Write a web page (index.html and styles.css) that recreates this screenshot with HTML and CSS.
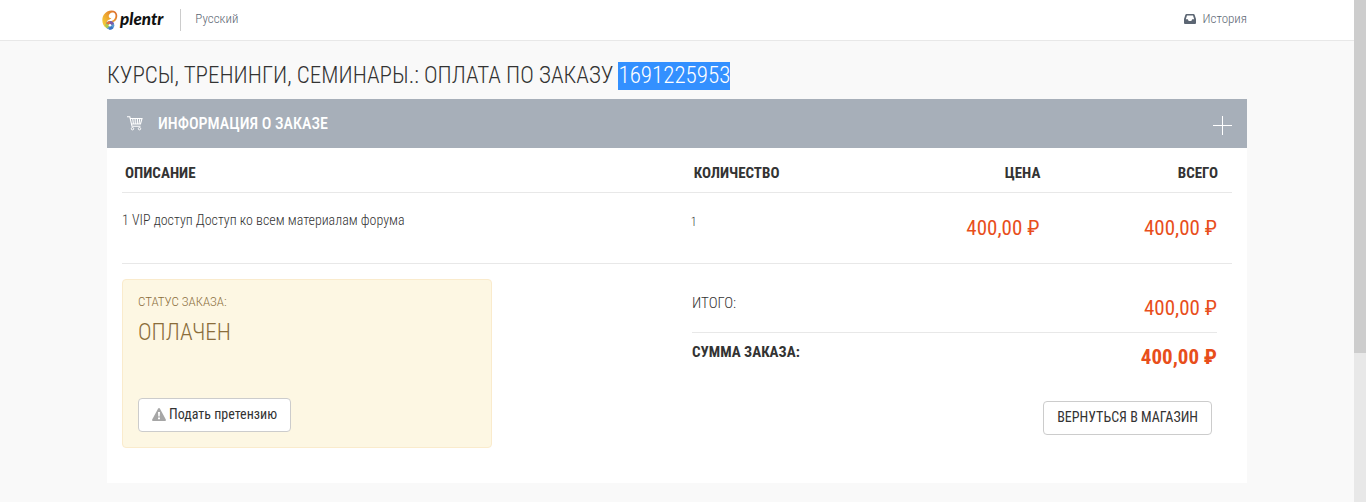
FILE: index.html
```
<!DOCTYPE html>
<html lang="ru">
<head>
    <meta charset="UTF-8">
    <meta name="viewport" content="width=device-width, initial-scale=1.0">
    <title>Оплата по заказу 1691225953</title>
    <link rel="stylesheet" href="styles.css">
</head>
<body>
    <div class="page">
        <header class="navbar">
            <div class="container navbar-inner">
                <a class="logo" href="#">
                    <svg class="logo-icon" width="17" height="20" viewBox="0 0 17 20" aria-hidden="true">
                        <defs>
                            <linearGradient id="gold" x1="0" y1="1" x2="1" y2="0">
                                <stop offset="0" stop-color="#f7dc3c"/>
                                <stop offset=".5" stop-color="#eda52f"/>
                                <stop offset="1" stop-color="#d9622c"/>
                            </linearGradient>
                        </defs>
                        <path fill="url(#gold)" d="M4.500 18C0 15.500-.8 9 1.800 4.800C4.500.500 10.500-.6 13.500 1.700C16.500 4.300 15.500 10 12 11.800C10 12.800 7.500 12.300 6.500 10.800C9 11.500 11 10.800 12.400 9C14 6.800 13.800 3.800 12 2.800C9.800 1.600 7.300 3.200 6.800 5.500C6.500 7.500 8 8.500 9.500 7.800C8.300 10 5.500 9.500 5 12Z"/>
                        <circle cx="8" cy="15.300" r="4.300" fill="#5c9bd0"/>
                        <path d="M8 15.300L4 13.500A4.300 4.300 0 0 1 8 11Z" fill="#e5703c"/>
                        <path d="M8 15.300V11A4.300 4.300 0 0 1 12 14Z" fill="#7d5ba6"/>
                        <path d="M8 15.300L5 18.500A4.300 4.300 0 0 1 4 13.500Z" fill="#b0c94b"/>
                        <path d="M8 15.300L11.500 18A4.300 4.300 0 0 1 7 19.500Z" fill="#3974c4"/>
                        <circle cx="8" cy="15.300" r="1.300" fill="#fff"/>
                    </svg>
                    <span class="logo-text">plentr</span>
                </a>
                <a class="nav-link lang" href="#">Русский</a>
                <a class="nav-link history" href="#">
                    <svg width="12" height="10" viewBox="0 0 12 10" aria-hidden="true">
                        <path fill="#5c6673" fill-rule="evenodd" d="M2.500 0H9.500Q10.300 0 10.600.800L12 5V9Q12 10 11 10H1Q0 10 0 9V5L1.400.800Q1.700 0 2.500 0ZM3 1.500L1.800 5.300H3.800L4.700 7H7.300L8.200 5.300H10.200L9 1.500Z"/>
                    </svg>
                    История
                </a>
            </div>
        </header>

        <main class="container">
            <h1 class="title">Курсы, тренинги, семинары.: оплата по заказу <mark>1691225953</mark></h1>

            <section class="panel">
                <div class="panel-heading">
                    <svg width="16" height="15" viewBox="0 0 16 15" fill="none" stroke="#fff" aria-hidden="true">
                        <path d="M0 .700H2.800L5 10.300H13.500M3.200 2.500H15L13.500 8H4.600M5.700 2.500L6.400 8M8.100 2.500L8.300 8M10.500 2.500L10.300 8M12.800 2.500L12 8" stroke-width="1.100"/>
                        <circle cx="5.500" cy="12.700" r="1.200"/>
                        <circle cx="12.500" cy="12.700" r="1.200"/>
                    </svg>
                    <h2>Информация о заказе</h2>
                    <button class="toggle" type="button" aria-label="Развернуть">
                        <svg width="19" height="19" viewBox="0 0 19 19" stroke="#fff" aria-hidden="true">
                            <path d="M9.500 0V19M0 9.500H19"/>
                        </svg>
                    </button>
                </div>

                <div class="panel-body">
                    <table class="items">
                        <thead>
                            <tr>
                                <th class="col-name">Описание</th>
                                <th class="col-count">Количество</th>
                                <th class="col-price">Цена</th>
                                <th class="col-price">Всего</th>
                            </tr>
                        </thead>
                        <tbody>
                            <tr>
                                <td>1 VIP доступ Доступ ко всем материалам форума</td>
                                <td class="count">1</td>
                                <td class="price">400,00 ₽</td>
                                <td class="price">400,00 ₽</td>
                            </tr>
                        </tbody>
                    </table>

                    <div class="summary">
                        <div class="status">
                            <div class="status-label">Статус заказа:</div>
                            <div class="status-value">Оплачен</div>
                            <button class="btn" type="button">
                                <svg width="14" height="13" viewBox="0 0 14 13" aria-hidden="true">
                                    <path d="M7 0Q7.600 0 8 .700L13.800 11.500Q14.300 13 13 13H1Q-.3 13 .2 11.500L6 .700Q6.400 0 7 0Z" fill="#a6a6a6"/>
                                    <path d="M6 4H8L7.700 8.500H6.300ZM6 9.500H8V11.300H6Z" fill="#fff"/>
                                </svg>
                                Подать претензию
                            </button>
                        </div>

                        <div class="totals">
                            <div class="total-row">
                                <span>Итого:</span>
                                <span class="price">400,00 ₽</span>
                            </div>
                            <div class="total-row total-sum">
                                <span>Сумма заказа:</span>
                                <span class="price">400,00 ₽</span>
                            </div>
                            <button class="btn btn-back" type="button">Вернуться в магазин</button>
                        </div>
                    </div>
                </div>
            </section>
        </main>
    </div>
    <div class="scrollbar" aria-hidden="true"><div class="scrollbar-thumb"></div></div>
</body>
</html>
```
FILE: styles.css
```
* {
    box-sizing: border-box;
}

body {
    display: flex;
    min-height: 100vh;
    margin: 0;
    font-family: "Roboto Condensed", Roboto, "Liberation Sans Narrow", sans-serif;
    font-size: 14px;
    font-weight: 300;
    line-height: 20px;
    color: #333;
    background: #f9f9f9;
}

.page {
    flex: 1;
}

.container {
    max-width: 1140px;
    margin: 0 auto;
}

.navbar {
    background: #fff;
    border-bottom: 1px solid #e8e8e8;
}

.navbar-inner {
    display: flex;
    align-items: center;
    height: 40px;
}

.logo {
    display: flex;
    align-items: center;
    gap: 1px;
    margin-left: -5px;
    padding-right: 17px;
    border-right: 1px solid #ccc;
    color: #111;
    text-decoration: none;
}

.logo-text {
    padding-bottom: 2px;
    font-family: Lato, sans-serif;
    font-size: 17px;
    font-style: italic;
    font-weight: 900;
}

.nav-link {
    padding-bottom: 2px;
    font-size: 13px;
    color: #5c6673;
    text-decoration: none;
}

.lang {
    margin-left: 14px;
}

.history {
    display: flex;
    align-items: center;
    gap: 7px;
    margin-left: auto;
}

.title {
    margin: 21px 0 9px;
    font-size: 23px;
    font-weight: 300;
    line-height: 28px;
    text-transform: uppercase;
}

.title mark {
    display: inline-block;
    color: #fff;
    background: #3390ff;
}

.panel {
    background: #fff;
}

.panel-heading {
    display: flex;
    align-items: center;
    gap: 15px;
    height: 49px;
    padding: 0 15px 0 20px;
    color: #fff;
    background: #a7afb9;
}

.panel-heading h2 {
    margin: 0;
    font-size: 16px;
    font-weight: 500;
    text-transform: uppercase;
}

.toggle {
    display: flex;
    margin-left: auto;
    padding: 4px 0 0;
    border: 0;
    background: none;
    cursor: pointer;
}

.panel-body {
    padding: 0 15px 35px;
}

.items {
    width: 100%;
    border-collapse: separate;
    border-spacing: 0;
    table-layout: fixed;
}

.items th {
    height: 45px;
    padding: 6px 14px 0 3px;
    font-size: 15px;
    font-weight: 700;
    text-align: left;
    text-transform: uppercase;
    border-bottom: 1px solid #e8e8e8;
}

.items td {
    height: 71px;
    padding: 17px 15px 0 0;
    vertical-align: top;
    border-bottom: 1px solid #e8e8e8;
}

.items .col-count {
    width: 186px;
}

.items .col-price {
    width: 16%;
    text-align: right;
}

.items .count {
    padding-top: 19px;
    font-size: 12px;
}

.price {
    font-size: 21px;
    font-weight: 400;
    line-height: 28px;
    color: #e84e1b;
}

.items .price {
    padding-top: 21px;
    text-align: right;
}

.summary {
    display: flex;
    justify-content: space-between;
    align-items: flex-start;
    margin-top: 15px;
}

.status {
    width: 33.333%;
    padding: 12px 15px 15px;
    color: #8a6d3b;
    background: #fdf7e3;
    border: 1px solid #faebcc;
    border-radius: 4px;
}

.status-label {
    font-size: 13px;
    text-transform: uppercase;
}

.status-value {
    margin: 7px 0 51px;
    font-size: 23px;
    line-height: 28px;
    text-transform: uppercase;
}

.btn {
    display: flex;
    align-items: center;
    gap: 3px;
    height: 34px;
    padding: 0 13px 2px;
    font: 400 14px/20px "Roboto Condensed", Roboto, "Liberation Sans Narrow", sans-serif;
    color: #333;
    background: #fff;
    border: 1px solid #ccc;
    border-radius: 4px;
    cursor: pointer;
}

.totals {
    display: flex;
    flex-direction: column;
    width: 47.300%;
    margin-right: 15px;
}

.total-row {
    display: flex;
    justify-content: space-between;
    height: 54px;
    padding-top: 14px;
    font-size: 15px;
    text-transform: uppercase;
    border-bottom: 1px solid #e8e8e8;
}

.total-row .price {
    line-height: 30px;
}

.total-sum {
    height: 68px;
    padding-top: 9px;
    border-bottom: 0;
}

.total-sum,
.total-sum .price {
    font-weight: 700;
}

.btn-back {
    align-self: flex-end;
    margin-right: 5px;
    text-transform: uppercase;
}

.scrollbar {
    width: 12px;
    background: #e8e8e8;
}

.scrollbar-thumb {
    height: 353px;
    background: #cdcdcd;
}
```
